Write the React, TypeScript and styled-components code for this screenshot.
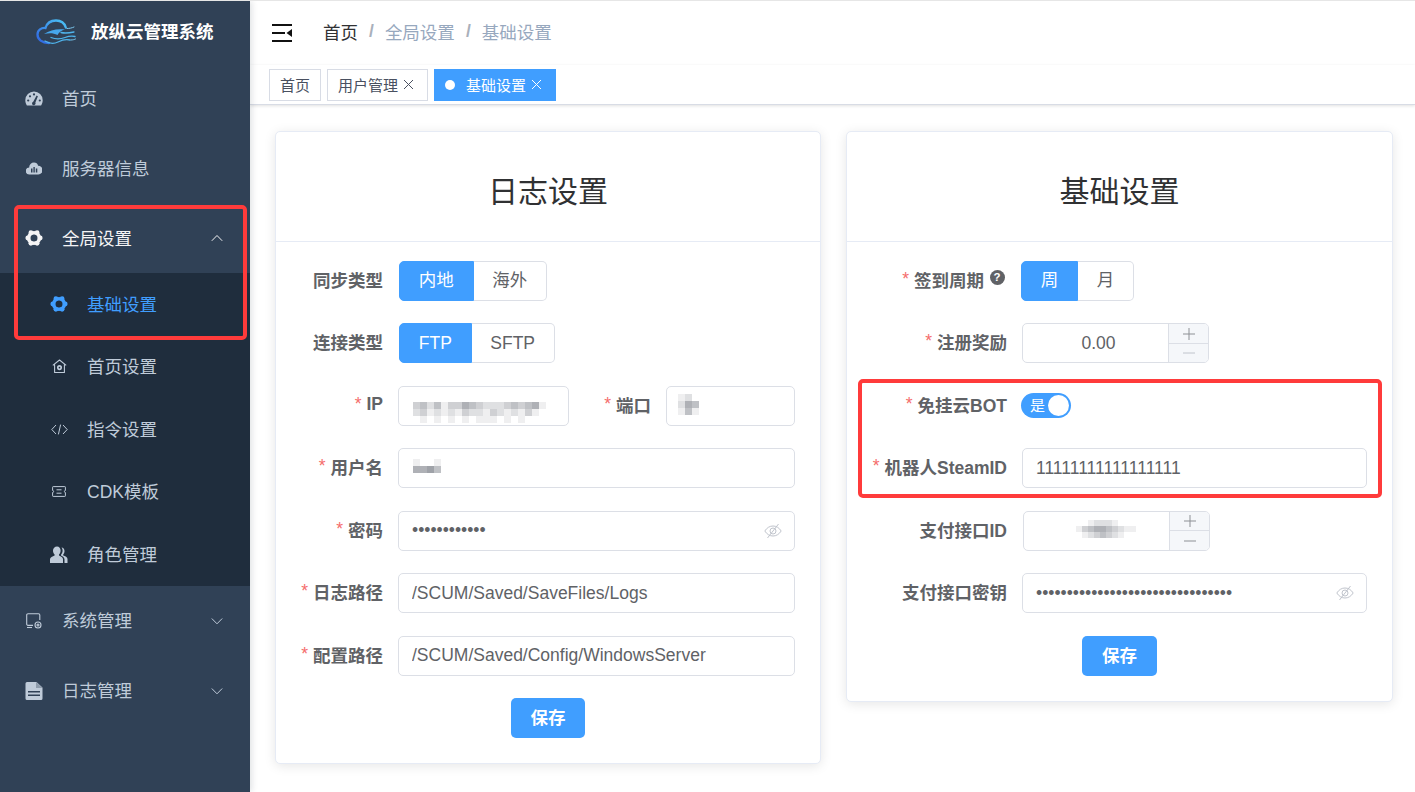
import React from 'react'
import styled, { createGlobalStyle } from 'styled-components'

const FONT = '"Liberation Sans", "Noto Sans CJK SC", sans-serif'

const GlobalStyle = createGlobalStyle`
  html, body { margin: 0; padding: 0; background: #fff; }
  body { font-family: ${FONT}; overflow: hidden; }
  * { box-sizing: border-box; }
`

const Page = styled.div`
  position: relative;
  display: flex;
  width: 1415px;
  height: 792px;
  overflow: hidden;
  border-top: 1px solid #e6e6e6;
`

const Sidebar = styled.aside`
  flex: 0 0 250px;
  background: #304156;
  position: relative;
  z-index: 2;
  box-shadow: 2px 0 6px rgba(0, 21, 41, 0.12);
`

const LogoRow = styled.div`
  height: 62px;
  display: flex;
  align-items: center;
  padding-left: 36px;
  gap: 13px;
`

const LogoText = styled.div`
  color: #fff;
  font-size: 17.5px;
  font-weight: 700;
  padding-bottom: 3px;
`

const MenuItem = styled.div<{ $active?: boolean }>`
  height: 70px;
  display: flex;
  align-items: center;
  padding-left: 25px;
  font-size: 17.5px;
  color: ${(p) => (p.$active ? '#f4f4f5' : '#bfcbd9')};
`

const MenuText = styled.span`
  padding-bottom: 2px;
`

const MenuIcon = styled.span`
  flex: 0 0 18px;
  width: 18px;
  height: 18px;
  margin-right: 19px;
  display: flex;
  align-items: center;
  justify-content: center;
  color: inherit;
`

const Chevron = styled.span`
  margin-left: auto;
  margin-right: 27px;
  display: flex;
`

const SubMenu = styled.div`
  background: #1f2d3d;
`

const SubItem = styled.div<{ $active?: boolean }>`
  height: 62.5px;
  display: flex;
  align-items: center;
  padding-left: 50px;
  font-size: 17.5px;
  color: ${(p) => (p.$active ? '#409eff' : '#bfcbd9')};
`

const Main = styled.main`
  flex: 1;
  min-width: 0;
  display: flex;
  flex-direction: column;
`

const Header = styled.header`
  height: 64px;
  display: flex;
  align-items: center;
  padding-left: 22px;
  box-shadow: 0 1px 4px rgba(0, 21, 41, 0.08);
  position: relative;
`

const Crumbs = styled.nav`
  display: flex;
  align-items: center;
  margin-left: 31px;
  font-size: 17.5px;
  padding-bottom: 3px;
`

const Crumb = styled.span<{ $dim?: boolean }>`
  color: ${(p) => (p.$dim ? '#97a8be' : '#303133')};
`

const CrumbSep = styled.span`
  color: #a9b0bb;
  font-weight: 700;
  margin: 0 11px;
`

const TagBar = styled.div`
  height: 40px;
  display: flex;
  align-items: center;
  gap: 6px;
  padding-left: 19px;
  background: #fff;
  border-bottom: 1px solid #d8dce5;
  box-shadow: 0 1px 3px rgba(0, 0, 0, 0.12);
  position: relative;
`

const Tag = styled.div<{ $active?: boolean; $closable?: boolean }>`
  height: 32px;
  display: flex;
  align-items: center;
  padding: 0 ${(p) => (p.$closable ? 13 : 10)}px 0 10px;
  font-size: 15px;
  border: 1px solid ${(p) => (p.$active ? '#409eff' : '#d8dce5')};
  background: ${(p) => (p.$active ? '#409eff' : '#fff')};
  color: ${(p) => (p.$active ? '#fff' : '#495060')};
`

const TagDot = styled.span`
  width: 10px;
  height: 10px;
  border-radius: 50%;
  background: #fff;
  margin-right: 11px;
`

const TagClose = styled.span`
  display: flex;
  margin-left: 5px;
`

const Content = styled.div`
  display: grid;
  grid-template-columns: 546px 547px;
  gap: 25px;
  align-items: start;
  padding: 26px 0 0 25px;
`

const Card = styled.section`
  background: #fff;
  border: 1px solid #e6ebf5;
  border-radius: 5px;
  box-shadow: 0 2px 12px rgba(0, 0, 0, 0.1);
`

const CardTitle = styled.h2`
  margin: 0;
  height: 110px;
  padding-top: 4px;
  display: flex;
  align-items: center;
  justify-content: center;
  font-size: 30px;
  font-weight: 400;
  color: #303133;
  border-bottom: 1px solid #e6ebf5;
`

const CardBody = styled.div`
  padding: 18.75px 25px 25px 0;
`

const Row = styled.div`
  display: flex;
  align-items: center;
  height: 40px;
  margin-bottom: 22.5px;
`

const Label = styled.label<{ $w?: number }>`
  flex: 0 0 ${(p) => p.$w ?? 107}px;
  display: flex;
  align-items: center;
  justify-content: flex-end;
  margin-right: 15px;
  padding-bottom: 3px;
  font-size: 17.5px;
  font-weight: 700;
  color: #606266;
  white-space: nowrap;
`

const Req = styled.span`
  color: #f56c6c;
  font-weight: 400;
  margin-right: 5px;
`

const Help = styled.span`
  width: 15px;
  height: 15px;
  border-radius: 50%;
  background: #606266;
  color: #fff;
  font-size: 11.5px;
  line-height: 15px;
  text-align: center;
  margin: -4px 1.5px 0 5.5px;
`

const RadioGroup = styled.div<{ $nudge?: boolean }>`
  display: flex;
  height: 40px;
  margin-left: ${(p) => (p.$nudge ? 1 : 0)}px;
`

const RadioButton = styled.div<{ $on?: boolean; $cjk?: boolean }>`
  display: flex;
  align-items: center;
  padding: 0 18.75px ${(p) => (p.$cjk ? 4 : 0)}px;
  font-size: 17.5px;
  color: ${(p) => (p.$on ? '#fff' : '#606266')};
  background: ${(p) => (p.$on ? '#409eff' : '#fff')};
  border: 1px solid ${(p) => (p.$on ? '#409eff' : '#dcdfe6')};
  &:first-child { border-radius: 5px 0 0 5px; }
  &:last-child { border-radius: 0 5px 5px 0; border-left: 0; }
`

const Field = styled.div<{ $w?: number }>`
  position: relative;
  height: 40px;
  flex: ${(p) => (p.$w ? `0 0 ${p.$w}px` : '1')};
  min-width: 0;
`

const TextInput = styled.input`
  width: 100%;
  height: 100%;
  padding: 0 13px;
  border: 1px solid #dcdfe6;
  border-radius: 5px;
  outline: none;
  background: #fff;
  color: #606266;
  font-family: ${FONT};
  font-size: 17.5px;
`

const EyeWrap = styled.span`
  position: absolute;
  right: 13px;
  top: 12px;
  display: flex;
  color: #c0c4cc;
`

const Blur = styled.span<{ $x: number; $y: number }>`
  position: absolute;
  left: ${(p) => p.$x}px;
  top: ${(p) => p.$y}px;
  display: flex;
  filter: blur(0.6px);
`

const NumberBox = styled.div<{ $nudge?: boolean }>`
  position: relative;
  width: 187px;
  height: 40px;
  margin-left: ${(p) => (p.$nudge ? 1 : 0)}px;
  border: 1px solid #dcdfe6;
  border-radius: 5px;
  overflow: hidden;
  display: flex;
`

const NumberValue = styled.div`
  flex: 1;
  display: flex;
  align-items: center;
  justify-content: center;
  padding-left: 6px;
  font-size: 17.5px;
  color: #606266;
`

const Stepper = styled.div`
  flex: 0 0 40px;
  display: flex;
  flex-direction: column;
  border-left: 1px solid #dcdfe6;
  background: #f5f7fa;
`

const Step = styled.div<{ $off?: boolean }>`
  flex: 1;
  display: flex;
  align-items: center;
  justify-content: center;
  color: ${(p) => (p.$off ? '#c0c4cc' : '#8d9095')};
  & + & { border-top: 1px solid #dcdfe6; }
`

const Switch = styled.div`
  position: relative;
  width: 50px;
  height: 25px;
  margin: -1px 0 0 -1px;
  border-radius: 13px;
  background: #409eff;
  color: #fff;
  font-size: 15px;
  line-height: 25px;
  padding-left: 9px;
`

const Knob = styled.span`
  position: absolute;
  right: 2px;
  top: 2px;
  width: 21px;
  height: 21px;
  border-radius: 50%;
  background: #fff;
`

const ButtonRow = styled.div`
  display: flex;
  justify-content: center;
  padding-left: 25px;
`

const SaveButton = styled.button`
  width: 74.5px;
  height: 40px;
  border: 0;
  border-radius: 5px;
  padding: 0 0 3px;
  background: #409eff;
  color: #fff;
  font-family: ${FONT};
  font-size: 17.5px;
  font-weight: 700;
`

const Highlight = styled.div<{ $l: number; $t: number; $w: number; $h: number }>`
  position: absolute;
  left: ${(p) => p.$l}px;
  top: ${(p) => p.$t}px;
  width: ${(p) => p.$w}px;
  height: ${(p) => p.$h}px;
  border: 4px solid #ff3b3b;
  border-radius: 5px;
  z-index: 5;
  pointer-events: none;
`

const LOBES = [0, 60, 120, 180, 240, 300]

const Gear = () => (
  <svg width="18" height="18" viewBox="0 0 18 18" fill="currentColor">
    <circle cx="9" cy="9" r="5.300" fill="none" stroke="currentColor" strokeWidth="3.600" />
    {LOBES.map((a) => (
      <circle key={a} cx={9 + 6.2 * Math.cos((a * Math.PI) / 180)} cy={9 + 6.2 * Math.sin((a * Math.PI) / 180)} r="2.400" />
    ))}
  </svg>
)

const IconDashboard = () => (
  <svg width="18" height="15" viewBox="0 0 18 15">
    <path d="M9 .5A8.7 8.7 0 0 0 .3 9.200c0 1.900.6 3.700 1.600 5.300h14.200c1-1.600 1.600-3.400 1.600-5.300A8.700 8.700 0 0 0 9 .5z" fill="currentColor" />
    <g fill="#304156">
      <circle cx="3.200" cy="9.500" r="1.100" />
      <circle cx="5" cy="5.300" r="1.100" />
      <circle cx="9" cy="3.400" r="1.100" />
      <circle cx="14.800" cy="9.500" r="1.100" />
      <path d="M11.600 4.600 12.900 5.200 10.400 11.600A1.800 1.800 0 1 1 8.200 10.700z" />
    </g>
  </svg>
)

const IconCloudServer = () => (
  <svg width="16" height="13" viewBox="0 0 16 13">
    <path d="M8 .5a4.300 4.300 0 0 1 4.100 3.200A3.600 3.600 0 0 1 12.400 12.500H3.400A3.500 3.500 0 0 1 3.200 5.500 4.800 4.800 0 0 1 8 .5z" fill="currentColor" />
    <path d="M5 6.500h1.500v4H5zM7.400 5h1.400v5.500H7.400zM9.800 6.500h1.500v4H9.800z" fill="#304156" />
  </svg>
)

const IconHomeGear = () => (
  <svg width="15" height="15" viewBox="0 0 15 15" fill="none" stroke="currentColor">
    <path d="M.8 6.400 7.500 1 14.200 6.400M2.600 5.400V13.500H12.400V5.400" strokeWidth="1.100" strokeLinejoin="round" />
    <circle cx="7.500" cy="8.600" r="1.700" strokeWidth="1.700" />
  </svg>
)

const IconCode = () => (
  <svg width="17" height="11" viewBox="0 0 17 11" fill="none" stroke="currentColor" strokeWidth="1">
    <path d="M5 1 .8 5.500 5 10M12 1l4.200 4.500L12 10M9.600 .6 7.400 10.400" />
  </svg>
)

const IconTicket = () => (
  <svg width="14" height="11" viewBox="0 0 14 11" fill="none" stroke="currentColor" strokeWidth="1">
    <path d="M1.200.6h11.600a.6.6 0 0 1 .6.6v3.300a1 1 0 0 0 0 2v3.300a.6.6 0 0 1-.6.6H1.200a.6.6 0 0 1-.6-.6V6.500a1 1 0 0 0 0-2V1.200a.6.6 0 0 1 .6-.6z" />
    <path d="M4.500 3.800h5M4.500 7.200h5" />
  </svg>
)

const IconPeople = () => (
  <svg width="18" height="17" viewBox="0 0 18 17" fill="currentColor">
    <path d="M7 .5c2.200 0 3.600 1.700 3.600 4 0 1.600-.6 3-1.600 3.900v1.200c2 .8 4 1.800 4 3.600V17H0v-3.800c0-1.800 2.600-2.800 4.600-3.600V8.400C3.600 7.500 3 6.100 3 4.500c0-2.300 1.800-4 4-4z" />
    <path d="M11.500 1.500c1.800.2 3 1.600 3 3.600 0 1.400-.5 2.500-1.300 3.300v1.100c2 .8 4.300 1.600 4.300 3.600V17h-3v-3.600c0-1.800-1.700-3-3.500-3.900V8.700c1-1 1.600-2.600 1.600-4.200 0-1.200-.4-2.200-1.100-3z" />
  </svg>
)

const IconMonitorGear = () => (
  <svg width="16" height="16" viewBox="0 0 16 16" fill="none" stroke="currentColor" strokeWidth="1.100">
    <path d="M7 12.400H2A1.300 1.300 0 0 1 .7 11V2A1.300 1.300 0 0 1 2 .7h10.500A1.300 1.300 0 0 1 13.800 2v5" />
    <path d="M1 14.500h5" />
    <circle cx="12" cy="12" r="3" />
    <circle cx="12" cy="12" r="1" />
  </svg>
)

const IconDoc = () => (
  <svg width="18" height="18" viewBox="0 0 18 18">
    <path d="M2 0h9.500L17.500 5.500V16.500A1.500 1.500 0 0 1 16 18H2A1.500 1.500 0 0 1 .5 16.500V1.500A1.500 1.500 0 0 1 2 0z" fill="currentColor" />
    <path d="M3 9h12v1.500H3zM3 12.500h12V14H3z" fill="#304156" />
    <path d="M11 0v6h6.500" fill="#304156" opacity="0.35" />
  </svg>
)

const ChevronIcon = ({ up }: { up?: boolean }) => (
  <svg width="12" height="8" viewBox="0 0 12 8" fill="none" stroke="currentColor" strokeWidth="1">
    <path d={up ? 'M.8 6.800 6 1.500l5.200 5.300' : 'M.8 1.500 6 6.800l5.200-5.300'} />
  </svg>
)

const Hamburger = () => (
  <svg width="20" height="18" viewBox="0 0 20 18" fill="#111">
    <path d="M0 0h20v2H0zM0 8h13v2H0zM0 16h20v2H0zM20 5v8L14.500 9z" />
  </svg>
)

const CloseIcon = () => (
  <svg width="11" height="11" viewBox="0 0 11 11" fill="none" stroke="currentColor" strokeWidth="1">
    <path d="M1 1l9 9M10 1l-9 9" />
  </svg>
)

const PlusIcon = () => (
  <svg width="12" height="12" viewBox="0 0 12 12" fill="none" stroke="currentColor" strokeWidth="1">
    <path d="M0 6h12M6 0v12" />
  </svg>
)

const MinusIcon = () => (
  <svg width="12" height="2" viewBox="0 0 12 2" fill="none" stroke="currentColor" strokeWidth="1">
    <path d="M0 1h12" />
  </svg>
)

const EyeOff = () => (
  <svg width="18" height="16" viewBox="0 0 18 16" fill="none" stroke="currentColor" strokeWidth="1">
    <path d="M.8 8C3 4.600 5.800 3 9 3s6 1.600 8.200 5C15 11.400 12.200 13 9 13S3 11.400.8 8z" />
    <circle cx="9" cy="8" r="3" />
    <path d="M14.500 1 3.500 15" />
  </svg>
)

const Logo = () => (
  <svg width="42" height="27" viewBox="0 0 42 27" fill="none">
    <defs>
      <linearGradient id="lg" x1="0" y1="1" x2="1" y2="0">
        <stop offset="0" stopColor="#2f62e0" />
        <stop offset="1" stopColor="#4cc4f5" />
      </linearGradient>
    </defs>
    <path d="M13 24C6 24 1.500 20.500 1.500 15.500 1.500 11 5.500 8.500 9.500 9 11 4 15 1.500 20 1.500c4.800 0 8.500 2.800 9.800 7" stroke="url(#lg)" strokeWidth="2.300" strokeLinecap="round" />
    <path d="M8 15c6-4 13-5.500 21-4.500-3.500 1-6 2.500-7.500 5.500-4-2-8.500-2-13.500-1z" fill="#46a8ee" />
    <path d="M9 22c5 3 9 3 13 1s8-3 12-2M15 18.500c5 2 10 1.500 14 0s6-2 10-1M25 13.500c4 1 8 .5 13-.5" stroke="#4fb4ec" strokeWidth="1.300" strokeLinecap="round" />
    <path d="M31 9.500c2.500 0 5-.5 7-1.500M35 21c2 0 3.500-.5 4.500-1" stroke="#7cc8f0" strokeWidth="1" strokeLinecap="round" />
  </svg>
)

// the redacted values in the screenshot: each digit is how dark that cell of the mosaic is
const Mosaic = ({ rows, cell = 7 }: { rows: string[]; cell?: number }) => (
  <svg width={rows[0].length * cell} height={rows.length * cell} shapeRendering="crispEdges">
    {rows.map((r, y) =>
      r.split('').map((d, x) => (
        <rect key={`${x}-${y}`} x={x * cell} y={y * cell} width={cell} height={cell} fill={`rgba(95,100,110,${Number(d) / 10})`} />
      ))
    )}
  </svg>
)

const Req2 = () => <Req>*</Req>

const App: React.FC = () => {
  return (
    <Page>
      <GlobalStyle />
      <Sidebar>
        <LogoRow>
          <Logo />
          <LogoText>放纵云管理系统</LogoText>
        </LogoRow>
        <MenuItem>
          <MenuIcon><IconDashboard /></MenuIcon><MenuText>首页</MenuText>
        </MenuItem>
        <MenuItem>
          <MenuIcon><IconCloudServer /></MenuIcon><MenuText>服务器信息</MenuText>
        </MenuItem>
        <MenuItem $active>
          <MenuIcon><Gear /></MenuIcon><MenuText>全局设置</MenuText>
          <Chevron><ChevronIcon up /></Chevron>
        </MenuItem>
        <SubMenu>
          <SubItem $active>
            <MenuIcon><Gear /></MenuIcon><MenuText>基础设置</MenuText>
          </SubItem>
          <SubItem>
            <MenuIcon><IconHomeGear /></MenuIcon><MenuText>首页设置</MenuText>
          </SubItem>
          <SubItem>
            <MenuIcon><IconCode /></MenuIcon><MenuText>指令设置</MenuText>
          </SubItem>
          <SubItem>
            <MenuIcon><IconTicket /></MenuIcon><MenuText>CDK模板</MenuText>
          </SubItem>
          <SubItem>
            <MenuIcon><IconPeople /></MenuIcon><MenuText>角色管理</MenuText>
          </SubItem>
        </SubMenu>
        <MenuItem>
          <MenuIcon><IconMonitorGear /></MenuIcon><MenuText>系统管理</MenuText>
          <Chevron><ChevronIcon /></Chevron>
        </MenuItem>
        <MenuItem>
          <MenuIcon><IconDoc /></MenuIcon><MenuText>日志管理</MenuText>
          <Chevron><ChevronIcon /></Chevron>
        </MenuItem>
      </Sidebar>
      <Main>
        <Header>
          <Hamburger />
          <Crumbs>
            <Crumb>首页</Crumb>
            <CrumbSep>/</CrumbSep>
            <Crumb $dim>全局设置</Crumb>
            <CrumbSep>/</CrumbSep>
            <Crumb $dim>基础设置</Crumb>
          </Crumbs>
        </Header>
        <TagBar>
          <Tag>首页</Tag>
          <Tag $closable>用户管理<TagClose><CloseIcon /></TagClose></Tag>
          <Tag $active $closable><TagDot />基础设置<TagClose><CloseIcon /></TagClose></Tag>
        </TagBar>
        <Content>
          <Card>
            <CardTitle>日志设置</CardTitle>
            <CardBody>
              <Row>
                <Label>同步类型</Label>
                <RadioGroup $nudge>
                  <RadioButton $on $cjk>内地</RadioButton>
                  <RadioButton $cjk>海外</RadioButton>
                </RadioGroup>
              </Row>
              <Row>
                <Label>连接类型</Label>
                <RadioGroup $nudge>
                  <RadioButton $on>FTP</RadioButton>
                  <RadioButton>SFTP</RadioButton>
                </RadioGroup>
              </Row>
              <Row>
                <Label><Req2 />IP</Label>
                <Field $w={171}>
                  <TextInput readOnly value="" />
                  <Blur $x={15} $y={9}>
                    <Mosaic rows={['0000000000000000000', '3424133543222343451', '2312121322132121310', '0101010101110101000']} />
                  </Blur>
                </Field>
                <Label $w={82}><Req2 />端口</Label>
                <Field>
                  <TextInput readOnly value="" />
                  <Blur $x={12} $y={8}>
                    <Mosaic rows={['120', '254', '141']} />
                  </Blur>
                </Field>
              </Row>
              <Row>
                <Label><Req2 />用户名</Label>
                <Field>
                  <TextInput readOnly value="" />
                  <Blur $x={15} $y={11}>
                    <Mosaic rows={['1001', '5564']} />
                  </Blur>
                </Field>
              </Row>
              <Row>
                <Label><Req2 />密码</Label>
                <Field>
                  <TextInput readOnly type="password" value="abcdefghijkl" />
                  <EyeWrap><EyeOff /></EyeWrap>
                </Field>
              </Row>
              <Row>
                <Label><Req2 />日志路径</Label>
                <Field>
                  <TextInput readOnly value="/SCUM/Saved/SaveFiles/Logs" />
                </Field>
              </Row>
              <Row>
                <Label><Req2 />配置路径</Label>
                <Field>
                  <TextInput readOnly value="/SCUM/Saved/Config/WindowsServer" />
                </Field>
              </Row>
              <ButtonRow>
                <SaveButton>保存</SaveButton>
              </ButtonRow>
            </CardBody>
          </Card>
          <Card>
            <CardTitle>基础设置</CardTitle>
            <CardBody>
              <Row>
                <Label $w={159}><Req2 />签到周期<Help>?</Help></Label>
                <RadioGroup>
                  <RadioButton $on $cjk>周</RadioButton>
                  <RadioButton $cjk>月</RadioButton>
                </RadioGroup>
              </Row>
              <Row>
                <Label $w={160}><Req2 />注册奖励</Label>
                <NumberBox>
                  <NumberValue>0.00</NumberValue>
                  <Stepper>
                    <Step><PlusIcon /></Step>
                    <Step $off><MinusIcon /></Step>
                  </Stepper>
                </NumberBox>
              </Row>
              <Row>
                <Label $w={160}><Req2 />免挂云BOT</Label>
                <Switch>是<Knob /></Switch>
              </Row>
              <Row>
                <Label $w={160}><Req2 />机器人SteamID</Label>
                <Field>
                  <TextInput readOnly value="11111111111111111" />
                </Field>
              </Row>
              <Row>
                <Label $w={160}>支付接口ID</Label>
                <NumberBox $nudge>
                  <NumberValue />
                  <Stepper>
                    <Step><PlusIcon /></Step>
                    <Step><MinusIcon /></Step>
                  </Stepper>
                  <Blur $x={52} $y={8}>
                    <Mosaic cell={6} rows={['0012221000', '1345543211', '0123432100']} />
                  </Blur>
                </NumberBox>
              </Row>
              <Row>
                <Label $w={160}>支付接口密钥</Label>
                <Field>
                  <TextInput readOnly type="password" value="abcdefghijklmnopqrstuvwxyz012345" />
                  <EyeWrap><EyeOff /></EyeWrap>
                </Field>
              </Row>
              <ButtonRow>
                <SaveButton>保存</SaveButton>
              </ButtonRow>
            </CardBody>
          </Card>
        </Content>
      </Main>
      <Highlight $l={14} $t={204} $w={233} $h={135} />
      <Highlight $l={858} $t={378} $w={524} $h={119} />
    </Page>
  )
}

export default App
